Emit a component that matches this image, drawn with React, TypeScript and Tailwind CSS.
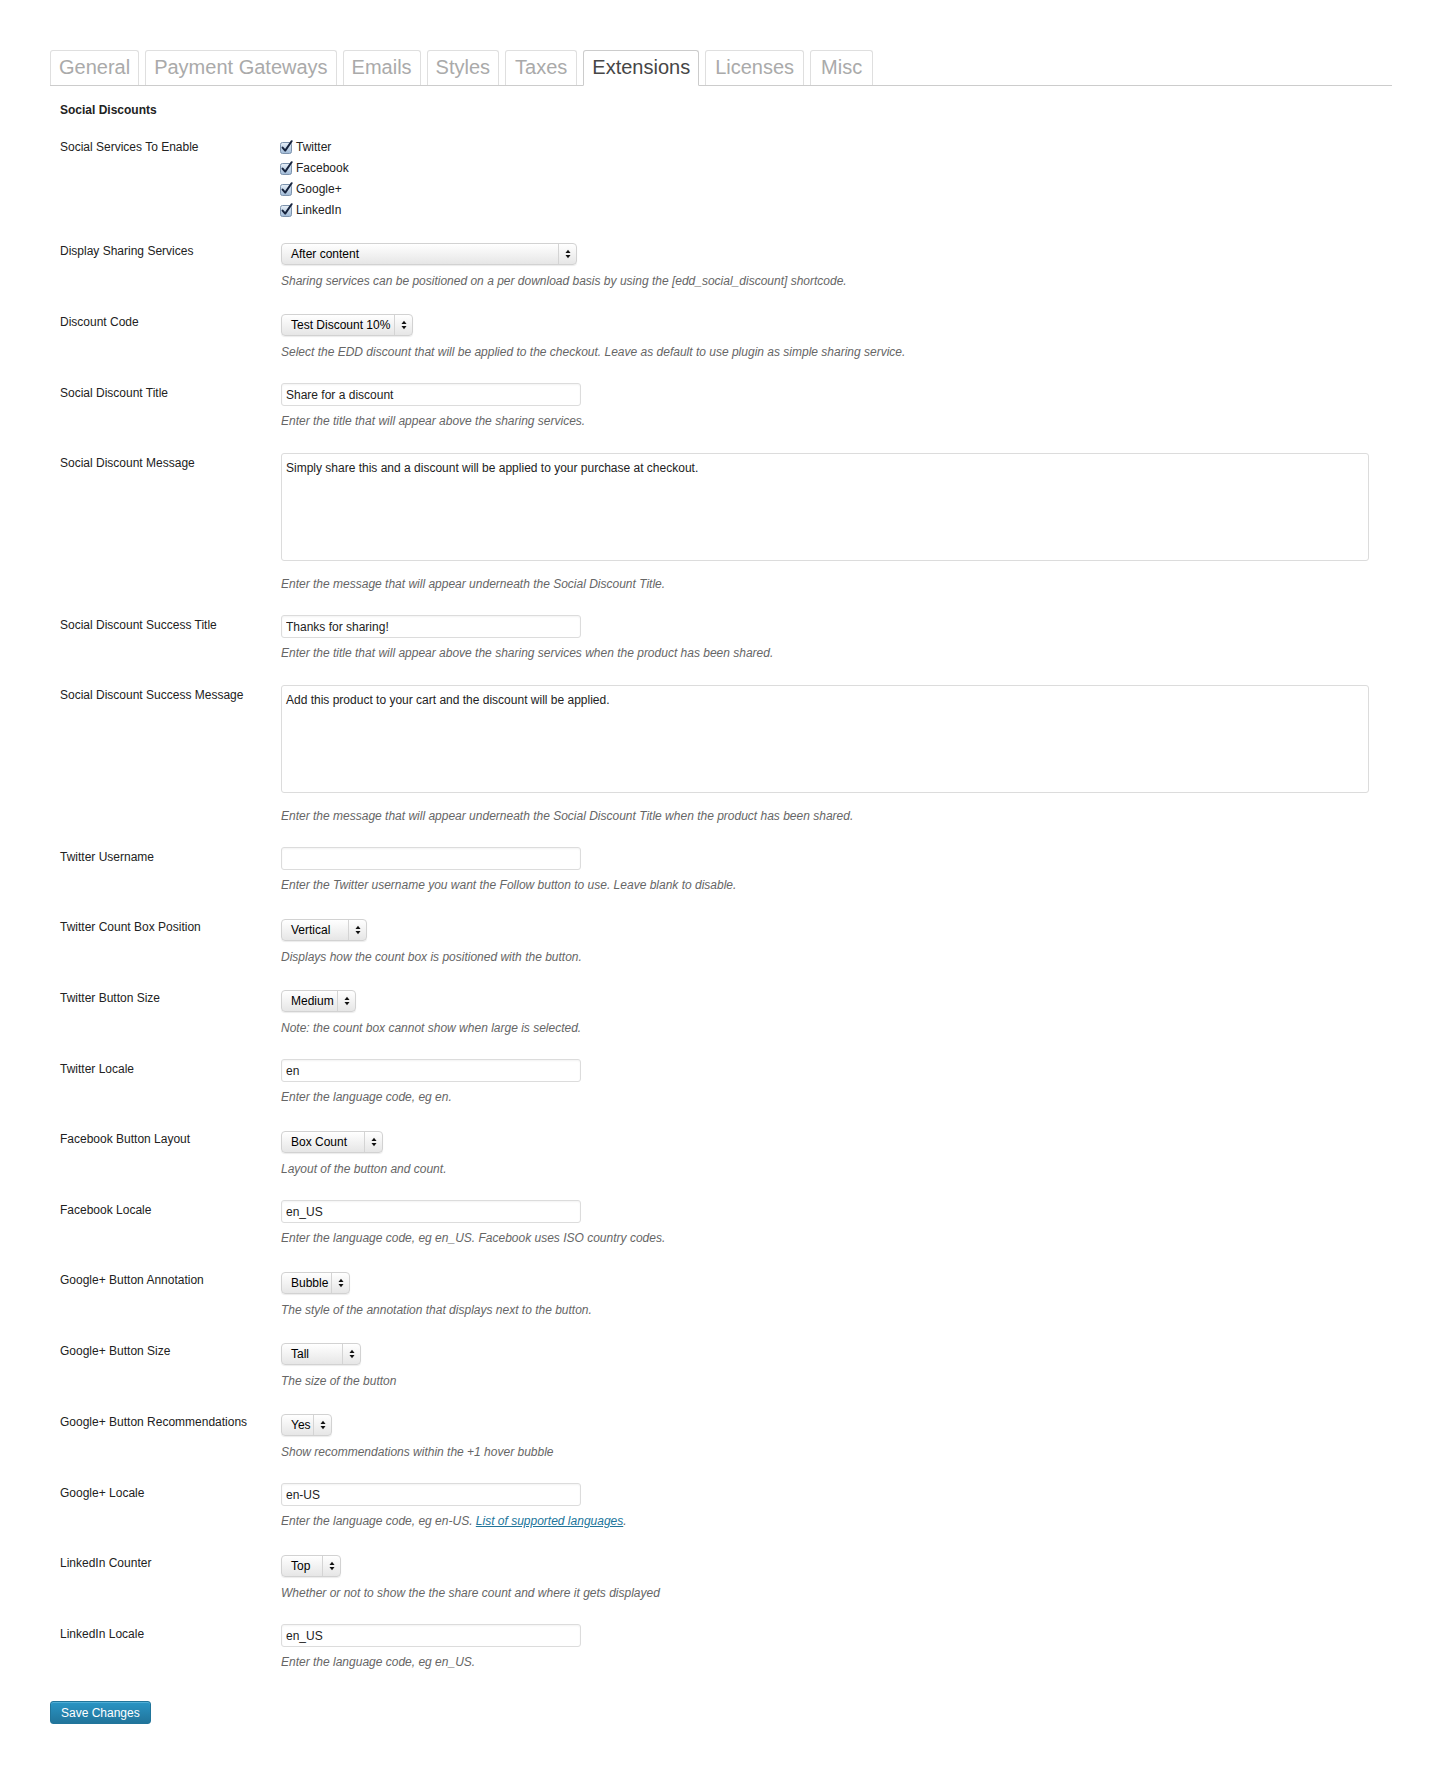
import type { ReactNode } from 'react';

type Row = {
  label: string;
  kind: 'select' | 'input' | 'textarea';
  value: string;
  w?: string;
  desc: ReactNode;
};

// padding per tab so widths line up with the Helvetica original
const tabs = [
  { name: 'General', pad: 'px-[8px]' },
  { name: 'Payment Gateways', pad: 'px-[8px]' },
  { name: 'Emails', pad: 'px-[8px]' },
  { name: 'Styles', pad: 'px-[8px]' },
  { name: 'Taxes', pad: 'px-[9px]' },
  { name: 'Extensions', pad: 'px-[8px]' },
  { name: 'Licenses', pad: 'px-[9px]' },
  { name: 'Misc', pad: 'px-[10px]' },
];

const services = ['Twitter', 'Facebook', 'Google+', 'LinkedIn'];

const rows: Row[] = [
  { label: 'Display Sharing Services', kind: 'select', value: 'After content', w: 'w-[296px]', desc: 'Sharing services can be positioned on a per download basis by using the [edd_social_discount] shortcode.' },
  { label: 'Discount Code', kind: 'select', value: 'Test Discount 10%', w: 'w-[132px]', desc: 'Select the EDD discount that will be applied to the checkout. Leave as default to use plugin as simple sharing service.' },
  { label: 'Social Discount Title', kind: 'input', value: 'Share for a discount', desc: 'Enter the title that will appear above the sharing services.' },
  { label: 'Social Discount Message', kind: 'textarea', value: 'Simply share this and a discount will be applied to your purchase at checkout.', desc: 'Enter the message that will appear underneath the Social Discount Title.' },
  { label: 'Social Discount Success Title', kind: 'input', value: 'Thanks for sharing!', desc: 'Enter the title that will appear above the sharing services when the product has been shared.' },
  { label: 'Social Discount Success Message', kind: 'textarea', value: 'Add this product to your cart and the discount will be applied.', desc: 'Enter the message that will appear underneath the Social Discount Title when the product has been shared.' },
  { label: 'Twitter Username', kind: 'input', value: '', desc: 'Enter the Twitter username you want the Follow button to use. Leave blank to disable.' },
  { label: 'Twitter Count Box Position', kind: 'select', value: 'Vertical', w: 'w-[86px]', desc: 'Displays how the count box is positioned with the button.' },
  { label: 'Twitter Button Size', kind: 'select', value: 'Medium', w: 'w-[75px]', desc: 'Note: the count box cannot show when large is selected.' },
  { label: 'Twitter Locale', kind: 'input', value: 'en', desc: 'Enter the language code, eg en.' },
  { label: 'Facebook Button Layout', kind: 'select', value: 'Box Count', w: 'w-[102px]', desc: 'Layout of the button and count.' },
  { label: 'Facebook Locale', kind: 'input', value: 'en_US', desc: 'Enter the language code, eg en_US. Facebook uses ISO country codes.' },
  { label: 'Google+ Button Annotation', kind: 'select', value: 'Bubble', w: 'w-[69px]', desc: 'The style of the annotation that displays next to the button.' },
  { label: 'Google+ Button Size', kind: 'select', value: 'Tall', w: 'w-[80px]', desc: 'The size of the button' },
  { label: 'Google+ Button Recommendations', kind: 'select', value: 'Yes', w: 'w-[51px]', desc: 'Show recommendations within the +1 hover bubble' },
  {
    label: 'Google+ Locale',
    kind: 'input',
    value: 'en-US',
    desc: (
      <>
        Enter the language code, eg en-US. <a className="text-[#21759b] underline">List of supported languages</a>.
      </>
    ),
  },
  { label: 'LinkedIn Counter', kind: 'select', value: 'Top', w: 'w-[60px]', desc: 'Whether or not to show the the share count and where it gets displayed' },
  { label: 'LinkedIn Locale', kind: 'input', value: 'en_US', desc: 'Enter the language code, eg en_US.' },
];

function CheckMark() {
  return (
    <svg width="14" height="14" viewBox="0 0 14 14" className="mr-[2px] shrink-0">
      <defs>
        <linearGradient id="cb" x1="0" y1="0" x2="0" y2="1">
          <stop offset="0" stopColor="#e8f0f8" />
          <stop offset="1" stopColor="#9fb9d6" />
        </linearGradient>
      </defs>
      <rect x="0.5" y="2.5" width="11" height="11" rx="2" fill="url(#cb)" stroke="#7d93ad" />
      <path d="M2.6 7.6 L5.2 10.6 L11.6 1.2" stroke="#16233d" strokeWidth="2" fill="none" strokeLinecap="round" strokeLinejoin="round" />
    </svg>
  );
}

function Select({ value, w }: { value: string; w?: string }) {
  return (
    <div className={`${w} h-[22px] flex rounded-[4px] border border-[#d2d2d2] bg-linear-to-b from-white to-[#e6e6e6] shadow-[0_1px_1px_rgba(0,0,0,0.08)] text-[12px] text-black`}>
      <span className="flex-1 flex items-center pl-[9px] whitespace-nowrap overflow-hidden">{value}</span>
      <span className="w-[18px] shrink-0 flex items-center justify-center border-l border-[#d4d4d4]">
        <svg width="6" height="10" viewBox="0 0 6 10">
          <path d="M0.5 4 L3 0.8 L5.5 4 Z" fill="#111" />
          <path d="M0.5 6 L3 9.2 L5.5 6 Z" fill="#111" />
        </svg>
      </span>
    </div>
  );
}

function Field({ row }: { row: Row }) {
  if (row.kind === 'select') {
    return (
      <div className="pt-[17px] pb-[8px]">
        <Select value={row.value} w={row.w} />
        <p className="mt-[8px] leading-[16px] text-[12px] italic text-[#666]">{row.desc}</p>
      </div>
    );
  }
  if (row.kind === 'textarea') {
    return (
      <div className="pt-[15px] pb-[8px]">
        <textarea
          readOnly
          value={row.value}
          className="block w-[1088px] h-[108px] resize-none rounded-[3px] border border-[#dcdcdc] px-[4px] py-[5px] leading-[18px] text-[12px] text-[#222] outline-none"
        />
        <p className="mt-[15px] leading-[16px] text-[12px] italic text-[#666]">{row.desc}</p>
      </div>
    );
  }
  return (
    <div className="pt-[15px] pb-[9px]">
      <input
        readOnly
        value={row.value}
        className="block w-[300px] h-[23px] rounded-[3px] border border-[#dcdcdc] px-[4px] text-[12px] text-[#222] outline-none shadow-[inset_0_1px_2px_rgba(0,0,0,0.05)]"
      />
      <p className="mt-[7px] leading-[16px] text-[12px] italic text-[#666]">{row.desc}</p>
    </div>
  );
}

export default function App() {
  return (
    <div className="min-h-screen bg-white pl-[50px] pt-[50px] text-[#222]" style={{ fontFamily: '"Liberation Sans", Arial, sans-serif' }}>
      {/* tabs */}
      <div className="w-[1342px] flex items-end gap-[6px] border-b border-[#ccc]">
        {tabs.map((t) =>
          t.name === 'Extensions' ? (
            <div key={t.name} className={`-mb-px h-[36px] ${t.pad} pt-[4px] rounded-t-[3px] border border-[#ccc] border-b-white bg-white text-[20px] leading-[24px] text-[#464646]`}>
              {t.name}
            </div>
          ) : (
            <div key={t.name} className={`h-[35px] ${t.pad} pt-[4px] rounded-t-[3px] border border-b-0 border-[#dfdfdf] bg-white text-[20px] leading-[24px] text-[#aaa]`}>
              {t.name}
            </div>
          )
        )}
      </div>

      <h3 className="mt-[15px] pl-[10px] h-[18px] leading-[18px] text-[12px] font-bold text-[#222]">Social Discounts</h3>

      <div className="mt-[3px]">
        <div className="flex">
          <div className="w-[231px] shrink-0 pl-[10px] pt-[16px] leading-[18px] text-[12px]">Social Services To Enable</div>
          <div className="pt-[14px] pb-[6px]">
            {services.map((s) => (
              <div key={s} className="flex items-center h-[21px] -ml-px text-[12px]">
                <CheckMark />
                <span>{s}</span>
              </div>
            ))}
          </div>
        </div>

        {rows.map((r) => (
          <div key={r.label} className="flex">
            <div className="w-[231px] shrink-0 pl-[10px] pt-[16px] leading-[18px] text-[12px]">{r.label}</div>
            <Field row={r} />
          </div>
        ))}
      </div>

      <button className="mt-[22px] h-[23px] px-[10px] rounded-[3px] border border-[#21759b] bg-linear-to-b from-[#2a95c5] to-[#21759b] text-[12px] text-white shadow-[inset_0_1px_0_rgba(120,200,230,0.5)]">
        Save Changes
      </button>
    </div>
  );
}
